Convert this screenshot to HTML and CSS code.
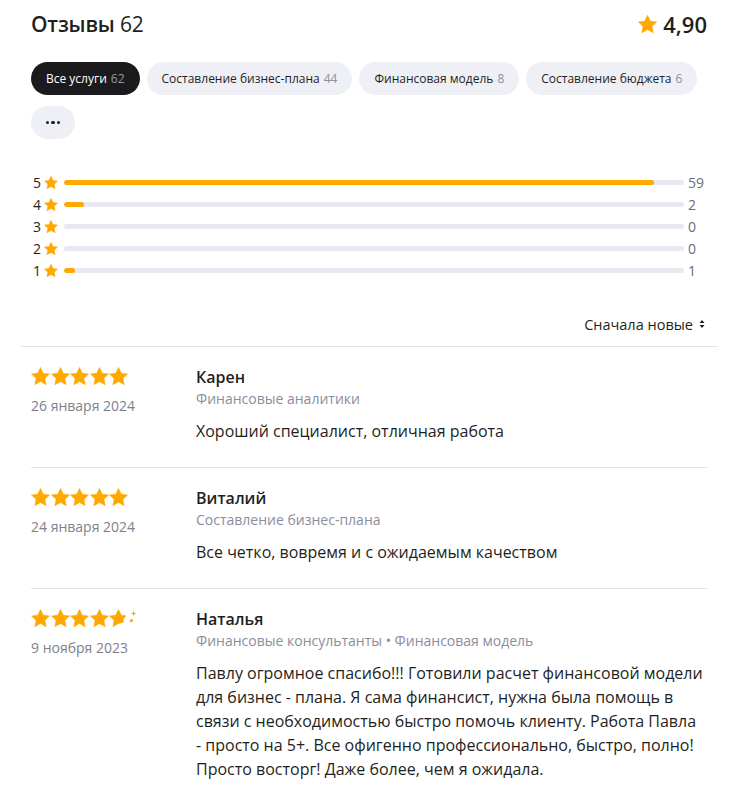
FILE: index.html
```html
<!DOCTYPE html>
<html lang="ru">
<head>
<meta charset="utf-8">
<link rel="stylesheet" href="styles.css">
</head>
<body>
<svg width="0" height="0" class="defs">
  <defs>
    <symbol id="star" viewBox="1.8 1.7 20.4 19.4">
      <path d="M12 2.2l2.95 6.2 6.75.85-4.95 4.7 1.3 6.75L12 17.35 5.95 20.7l1.3-6.75-4.95-4.7 6.75-.85z" stroke-linejoin="round"/>
    </symbol>
  </defs>
</svg>
<div class="page">
  <div class="header">
    <h1 class="title">Отзывы <span class="title-count">62</span></h1>
    <div class="score"><svg class="score-star"><use href="#star"/></svg><span>4,90</span></div>
  </div>

  <div class="chips">
    <span class="chip chip-active">Все услуги <span class="chip-count">62</span></span>
    <span class="chip">Составление бизнес-плана <span class="chip-count">44</span></span>
    <span class="chip">Финансовая модель <span class="chip-count">8</span></span>
    <span class="chip">Составление бюджета <span class="chip-count">6</span></span>
    <span class="chip chip-more"><span class="dot"></span><span class="dot"></span><span class="dot"></span></span>
  </div>

  <div class="bars">
    <div class="bar-row"><span class="bar-label">5</span><svg class="bar-star"><use href="#star"/></svg><div class="track"><div class="fill" style="width:95.2%"></div></div><span class="bar-count">59</span></div>
    <div class="bar-row"><span class="bar-label">4</span><svg class="bar-star"><use href="#star"/></svg><div class="track"><div class="fill" style="width:3.3%"></div></div><span class="bar-count">2</span></div>
    <div class="bar-row"><span class="bar-label">3</span><svg class="bar-star"><use href="#star"/></svg><div class="track"><div class="fill" style="width:0%"></div></div><span class="bar-count">0</span></div>
    <div class="bar-row"><span class="bar-label">2</span><svg class="bar-star"><use href="#star"/></svg><div class="track"><div class="fill" style="width:0%"></div></div><span class="bar-count">0</span></div>
    <div class="bar-row"><span class="bar-label">1</span><svg class="bar-star"><use href="#star"/></svg><div class="track"><div class="fill" style="width:1.7%"></div></div><span class="bar-count">1</span></div>
  </div>

  <div class="sort">
    <span>Сначала новые</span>
    <svg class="sort-icon" viewBox="0 0 6 10"><path d="M3 1L5.5 4H.5z M3 9L.5 6h5z"/></svg>
  </div>

  <div class="divider"></div>

  <div class="review">
    <div class="review-side">
      <div class="stars">
        <svg class="rstar"><use href="#star"/></svg><svg class="rstar"><use href="#star"/></svg><svg class="rstar"><use href="#star"/></svg><svg class="rstar"><use href="#star"/></svg><svg class="rstar"><use href="#star"/></svg>
      </div>
      <div class="date">26 января 2024</div>
    </div>
    <div class="review-main">
      <div class="name">Карен</div>
      <div class="category">Финансовые аналитики</div>
      <p class="text">Хороший специалист, отличная работа</p>
    </div>
  </div>

  <div class="review">
    <div class="review-side">
      <div class="stars">
        <svg class="rstar"><use href="#star"/></svg><svg class="rstar"><use href="#star"/></svg><svg class="rstar"><use href="#star"/></svg><svg class="rstar"><use href="#star"/></svg><svg class="rstar"><use href="#star"/></svg>
      </div>
      <div class="date">24 января 2024</div>
    </div>
    <div class="review-main">
      <div class="name">Виталий</div>
      <div class="category">Составление бизнес-плана</div>
      <p class="text">Все четко, вовремя и с ожидаемым качеством</p>
    </div>
  </div>

  <div class="review">
    <div class="review-side">
      <div class="stars">
        <svg class="rstar"><use href="#star"/></svg><svg class="rstar"><use href="#star"/></svg><svg class="rstar"><use href="#star"/></svg><svg class="rstar"><use href="#star"/></svg><svg class="rstar rstar-cut" viewBox="1.8 1.7 20.4 19.4"><path d="M12 2.2l2.95 6.2 5.3.7-2.2 2.1-1.1 2.6.4 2.2L12 17.35 5.95 20.7l1.3-6.75-4.95-4.7 6.75-.85z" stroke-linejoin="round"/></svg>
        <svg class="rstar-partial" viewBox="0 0 8 18"><path d="M4.6 1.6l.75 2.05 2.05.75-2.05.75-.75 2.05-.75-2.05L1.8 4.4l2.05-.75z"/><rect x="1" y="10.2" width="2.8" height="2.8" rx=".6"/></svg>
      </div>
      <div class="date">9 ноября 2023</div>
    </div>
    <div class="review-main">
      <div class="name">Наталья</div>
      <div class="category">Финансовые консультанты • Финансовая модель</div>
      <p class="text">Павлу огромное спасибо!!! Готовили расчет финансовой модели для бизнес - плана. Я сама финансист, нужна была помощь в связи с необходимостью быстро помочь клиенту. Работа Павла -&#8288;&nbsp;просто на 5+. Все офигенно профессионально, быстро, полно! Просто восторг! Даже более, чем я ожидала.</p>
    </div>
  </div>
</div>
</body>
</html>
```

FILE: styles.css
```css
* { box-sizing: border-box; }

body {
  margin: 0;
  background: #ffffff;
  color: #1f1f22;
  font-family: "Open Sans", "Noto Sans", "Liberation Sans", sans-serif;
}

.defs { position: absolute; width: 0; height: 0; overflow: hidden; }

.page {
  padding: 8px 31px 0 31px;
}

.header {
  display: flex;
  justify-content: space-between;
  align-items: center;
  height: 32px;
}

.title {
  margin: 0;
  font-size: 21px;
  font-weight: 600;
  line-height: 32px;
  letter-spacing: -0.2px;
}

.title-count {
  font-weight: 400;
}

.score {
  display: flex;
  align-items: center;
  gap: 6px;
  font-size: 22px;
  font-weight: 600;
  margin-right: 1px;
}

.score-star {
  width: 19px;
  height: 18px;
  fill: #ffa800;
  stroke: #ffa800;
  stroke-width: 0.8;
}

.chips {
  display: flex;
  flex-wrap: wrap;
  gap: 11px 7px;
  margin-top: 22px;
}

.chip {
  display: inline-flex;
  align-items: center;
  gap: 4px;
  height: 33px;
  padding: 0 15px;
  border-radius: 17px;
  background: #eef0f6;
  font-size: 12px;
  color: #1f1f22;
  white-space: nowrap;
}

.chip-count {
  color: #8f8f9c;
}

.chip-active {
  background: #1b1b1d;
  color: #ffffff;
}

.chip-active .chip-count {
  color: #9a9aa2;
}

.chip-more {
  width: 44px;
  padding: 0;
  justify-content: center;
  gap: 2px;
}

.dot {
  width: 3.5px;
  height: 3.5px;
  border-radius: 50%;
  background: #1f1f22;
}

.bars {
  margin-top: 32px;
}

.bar-row {
  display: flex;
  align-items: center;
  height: 22px;
}

.bar-label {
  width: 13px;
  font-size: 14px;
  text-align: left;
  padding-left: 2px;
  color: #1f1f22;
}

.bar-star {
  width: 14px;
  height: 13px;
  fill: #ffa800;
  stroke: #ffa800;
  stroke-width: 0.8;
}

.track {
  flex: 1;
  height: 5px;
  margin-left: 6px;
  border-radius: 3px;
  background: #e8e8f0;
  overflow: hidden;
}

.fill {
  height: 100%;
  border-radius: 3px;
  background: #ffa800;
}

.bar-count {
  width: 24px;
  padding-left: 4px;
  font-size: 14px;
  color: #6b6b80;
}

.sort {
  display: flex;
  justify-content: flex-end;
  align-items: center;
  gap: 6px;
  margin-top: 33px;
  height: 20px;
  font-size: 14.5px;
  font-weight: 500;
  color: #1f1f22;
  padding-right: 3px;
}

.sort-icon {
  width: 6px;
  height: 10px;
  fill: #1f1f22;
}

.divider {
  height: 1px;
  background: #e3e3e8;
  margin: 12px -10px 0 -10px;
}

.review {
  display: flex;
  padding: 19px 0 24px;
  border-bottom: 1px solid #e3e3e8;
}

.review-side {
  width: 165px;
  flex-shrink: 0;
  padding-top: 1px;
}

.stars {
  display: flex;
  align-items: center;
  gap: 0.6px;
  height: 18px;
}

.rstar {
  width: 19px;
  height: 18px;
  fill: #ffa800;
  stroke: #ffa800;
  stroke-width: 0.6;
}

.rstar-partial {
  width: 8px;
  height: 18px;
  fill: #ffa800;
  margin-left: 0;
}

.date {
  margin-top: 11px;
  font-size: 14px;
  line-height: 20px;
  color: #80808e;
}

.review-main {
  flex: 1;
}

.name {
  font-size: 16px;
  font-weight: 600;
  line-height: 22px;
}

.category {
  margin-top: 1px;
  font-size: 14px;
  line-height: 20px;
  color: #8c8c9e;
}

.text {
  margin: 10px 0 0;
  font-size: 16px;
  line-height: 24px;
  color: #1f1f22;
}
```
